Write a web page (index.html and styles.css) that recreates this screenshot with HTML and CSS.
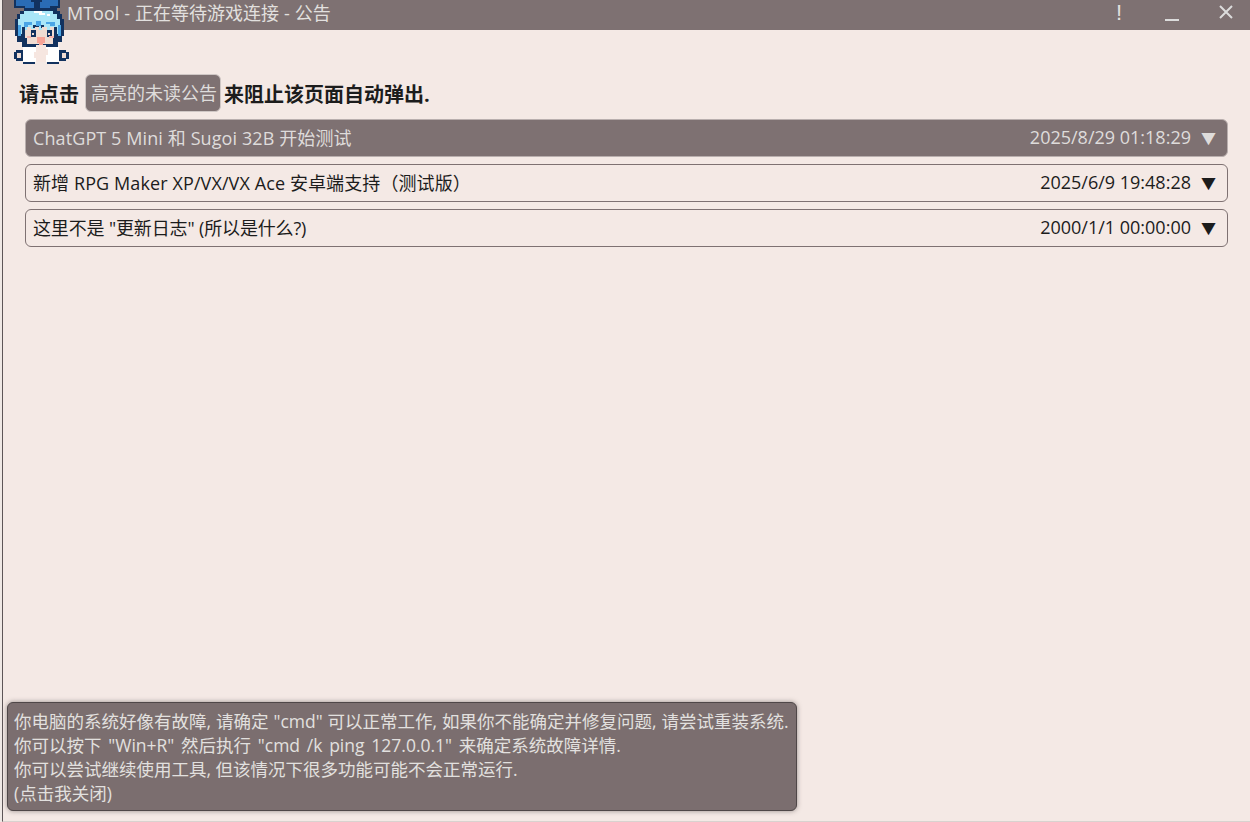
FILE: index.html
```html
<!DOCTYPE html>
<html lang="zh-CN">
<head>
    <meta charset="UTF-8">
    <title>MTool - 正在等待游戏连接 - 公告</title>
    <link rel="stylesheet" href="styles.css">
</head>
<body>
    <header class="titlebar">
        <span class="title">MTool - 正在等待游戏连接 - 公告</span>
        <div class="win-btns">
            <span class="win-btn win-info">!</span>
            <span class="win-btn win-min"></span>
            <svg class="win-close" width="16" height="16" viewBox="0 0 16 16"><path d="M2 2L14 14M14 2L2 14" stroke="#dcdcdc" stroke-width="2"/></svg>
        </div>
    </header>

    <!-- 吉祥物 -->
    <svg class="mascot" width="60" height="66" viewBox="12 0 60 66" shape-rendering="crispEdges">
        <path fill="#12325f" d="M14 0H60V8H57V11H60V14H62V19H64V36H62V42H58V45H22V42H17V36H15V19H17V14H20V11H24V8H14z"/>
        <path fill="#2a6cb5" d="M16 0H31V2H34V8H25V6H16zM42 0H58V6H50V8H40V2H42z"/>
        <path fill="#a9e6f8" d="M20 14H24V11H53V14H57V19H60V34H57V30H54V27H50V30H47V27H42V30H39V26H35V29H31V27H27V30H24V34H20V30H18V19H20z"/>
        <path fill="#fff" d="M34 11H42V13H45V15H39V13H34zM47 14H50V16H47z"/>
        <path fill="#4aa5e6" d="M18 25H21V36H18zM58 25H61V36H58zM24 22H32V25H28V27H24zM36 21H41V26H36zM46 22H55V26H50V24H46z"/>
        <path fill="#12325f" d="M22 27H25V38H22zM33 25H36V28H33zM41 25H44V28H41zM54 27H57V38H54z"/>
        <path fill="#f0dcd2" d="M25 30H27V27H31V29H35V27H39V30H42V27H47V30H50V27H54V38H53V44H27V38H25z"/>
        <path fill="#12325f" d="M31 30H36V37H31zM47 30H52V37H47z"/>
        <path fill="#f0dcd2" d="M32 33H34V35H32zM48 33H50V35H48z"/>
        <path fill="#f6b4ac" d="M27 36H31V38H27zM49 36H54V38H49z"/>
        <path fill="#f7a497" d="M37 37H45V43H43V45H39V43H37z"/>
        <path fill="#12325f" d="M22 44H36V47H22zM46 44H58V47H46zM16 50H23V61H16V59H14V52H16zM59 50H66V52H69V59H66V61H59z"/>
        <path fill="#fff" d="M23 47H59V62H23z"/>
        <path fill="#f6e6e0" d="M36 45H46V49H48V55H46V62H36V58H34V52H36z"/>
        <path fill="#f0dcd2" d="M17 53H21V58H17zM62 53H66V58H62z"/>
        <path fill="#12325f" d="M23 62H35V64H23zM47 62H59V64H47z"/>
    </svg>

    <main class="content">
        <p class="hint">
            <b>请点击</b>
            <span class="hint-tag">高亮的未读公告</span>
            <b>来阻止该页面自动弹出.</b>
        </p>

        <ul class="notice-list">
            <li class="notice unread">
                <span class="notice-title wide">ChatGPT 5 Mini 和 Sugoi 32B 开始测试</span>
                <span class="notice-date">2025/8/29 01:18:29<i class="arrow">▼</i></span>
            </li>
            <li class="notice">
                <span class="notice-title wide">新增 RPG Maker XP/VX/VX Ace 安卓端支持（测试版）</span>
                <span class="notice-date">2025/6/9 19:48:28<i class="arrow">▼</i></span>
            </li>
            <li class="notice">
                <span class="notice-title narrow">这里不是 "更新日志" (所以是什么?)</span>
                <span class="notice-date">2000/1/1 00:00:00<i class="arrow">▼</i></span>
            </li>
        </ul>
    </main>

    <div class="toast">
        <div class="toast-line first">你电脑的系统好像有故障, 请确定 "cmd" 可以正常工作, 如果你不能确定并修复问题, 请尝试重装系统.</div>
        <div class="toast-line second">你可以按下 "Win+R" 然后执行 "cmd /k ping 127.0.0.1" 来确定系统故障详情.</div>
        <div class="toast-line">你可以尝试继续使用工具, 但该情况下很多功能可能不会正常运行.</div>
        <div class="toast-line">(点击我关闭)</div>
    </div>
</body>
</html>
```

FILE: styles.css
```css
* {
    margin: 0;
    padding: 0;
    box-sizing: border-box;
}

html, body {
    height: 100%;
    overflow: hidden;
}

html {
    background: #efe8e5;
}

body {
    position: relative;
    margin-left: 2px;
    background: #f4e9e5;
    color: #1c1c1c;
    font-family: "Open Sans", "Noto Sans CJK SC", sans-serif;
    font-size: 18px;
    border-left: 1px solid #5d5557;
    border-bottom: 1px solid #d9d2cf;
}

.titlebar {
    height: 30px;
    margin-left: -1px;
    padding-left: 65px;
    background: #7e7172;
    color: #e2e0df;
    display: flex;
    justify-content: space-between;
    align-items: center;
}

.title {
    position: relative;
    top: -3px;
    font-size: 18px;
    word-spacing: 0.3px;
}

.win-btns {
    display: flex;
    align-items: center;
    height: 30px;
}

.win-btn {
    position: relative;
    margin-right: 43px;
}

.win-info {
    align-self: flex-start;
    font-family: "Liberation Sans", sans-serif;
    font-size: 22px;
    line-height: 26px;
}

.win-min {
    width: 14px;
    height: 2px;
    background: #dcdcdc;
    top: 5px;
    margin-right: 39px;
}

.win-close {
    margin-right: 16px;
    position: relative;
    top: -3px;
}

.mascot {
    position: absolute;
    top: 0;
    left: 9px;
}

.content {
    padding: 44px 22px 0 16px;
}

.hint {
    display: flex;
    align-items: center;
    height: 38px;
    font-size: 20px;
}

.hint-tag {
    margin: 0 3px 0 6px;
    padding: 0 3px 1px 5px;
    height: 38px;
    line-height: 36px;
    font-size: 18px;
    background: #7e7172;
    color: #dedcdb;
    border: 1px solid #cfc7c5;
    border-radius: 6px;
}

.notice-list {
    list-style: none;
    margin-left: 6px;
    margin-top: 7px;
    display: flex;
    flex-direction: column;
    gap: 7px;
}

.notice {
    height: 38px;
    padding: 0 11px 2px 7px;
    display: flex;
    justify-content: space-between;
    align-items: center;
    border: 1px solid #7e7172;
    border-radius: 6px;
}

.notice.unread {
    background: #7e7172;
    color: #dedcdb;
    border-color: #b9afae;
}

.notice-title.wide {
    letter-spacing: 0.1px;
}

.notice-title.narrow {
    letter-spacing: -0.14px;
}

.arrow {
    font-style: normal;
    font-size: 15px;
    margin-left: 10px;
}

.toast {
    position: absolute;
    left: 4px;
    bottom: 10px;
    width: 790px;
    height: 109px;
    padding: 6px;
    background: #7b6e6f;
    color: #e2e0df;
    border: 1px solid #4f4748;
    border-radius: 6px;
    box-shadow: 0 0 5px rgba(60, 50, 50, 0.5);
    font-size: 17.5px;
    line-height: 24px;
    white-space: nowrap;
}

.toast-line.first {
    word-spacing: 0.4px;
}

.toast-line.second {
    word-spacing: 2.2px;
}
```
